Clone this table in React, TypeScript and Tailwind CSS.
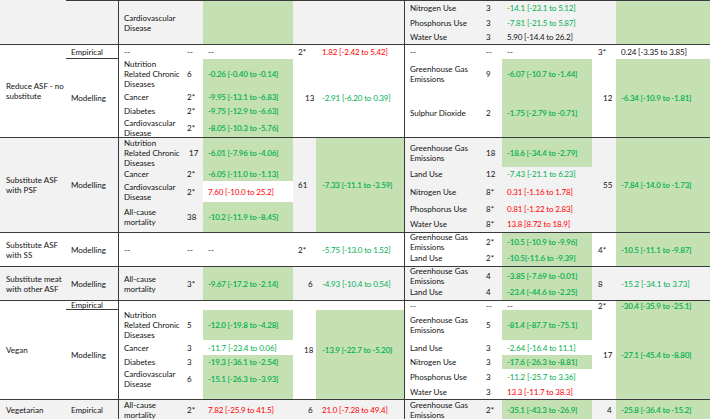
import React from "react";

const GRID =
  "grid grid-cols-[66px_52px_65px_20px_90px_23px_88px_79px_19px_90px_24px_94px]";

const CS: Record<number, string> = {
  1: "col-start-1",
  2: "col-start-2",
  3: "col-start-3",
  4: "col-start-4",
  5: "col-start-5",
  6: "col-start-6",
  7: "col-start-7",
  8: "col-start-8",
  9: "col-start-9",
  10: "col-start-10",
  11: "col-start-11",
  12: "col-start-12",
};
const RS: Record<number, string> = {
  1: "row-start-1",
  2: "row-start-2",
  3: "row-start-3",
  4: "row-start-4",
  5: "row-start-5",
  6: "row-start-6",
};
const SP: Record<number, string> = {
  1: "row-span-1",
  2: "row-span-2",
  3: "row-span-3",
  4: "row-span-4",
  5: "row-span-5",
  6: "row-span-6",
};
const PAD: Record<number, string> = {
  1: "pl-[6px]",
  2: "pl-[5px]",
  3: "pl-[5px]",
  4: "pl-[4px]",
  5: "pl-[5px]",
  6: "pl-[5px]",
  7: "pl-[6px]",
  8: "pl-[5px]",
  9: "pl-[3px]",
  10: "pl-[5px]",
  11: "pl-[6px]",
  12: "pl-[5px]",
};

type CP = {
  c: number;
  r?: number;
  rs?: number;
  cs?: number;
  p?: string;
  x?: string;
  children?: React.ReactNode;
};

function Cell({ c, r = 1, rs = 1, cs = 1, p, x = "", children }: CP) {
  const line = c === 3 || c === 8 ? "border-l border-l-[#3a3a3a]" : "";
  return (
    <div
      className={`${CS[c]} ${RS[r]} ${SP[rs]} ${cs === 2 ? "col-span-2" : ""} ${
        p ?? PAD[c]
      } ${line} flex items-center whitespace-nowrap ${x}`}
    >
      <div>{children}</div>
    </div>
  );
}

const GB = "bg-[#c5e0b3]";

function G({ children }: { children: React.ReactNode }) {
  return (
    <span className="font-semibold tracking-[-0.2px] text-[#00b050]">
      {children}
    </span>
  );
}
function Lg({ children }: { children: React.ReactNode }) {
  return (
    <span className="tracking-[-0.15px] text-[#00b050]">{children}</span>
  );
}
function R({ children }: { children: React.ReactNode }) {
  return (
    <span className="tracking-[-0.15px] text-[#ff0000]">{children}</span>
  );
}
function N({ children }: { children: React.ReactNode }) {
  return <span className="tracking-[-0.15px]">{children}</span>;
}

const NRCD = (
  <>
    Nutrition
    <br />
    Related Chronic
    <br />
    Diseases
  </>
);
const CVD = (
  <>
    Cardiovascular
    <br />
    Disease
  </>
);
const ACM = (
  <>
    All-cause
    <br />
    mortality
  </>
);
const GHG = (
  <>
    Greenhouse Gas
    <br />
    Emissions
  </>
);

export default function App() {
  return (
    <div className="w-[710px] h-[419px] overflow-hidden bg-white text-[#111] text-[8px] leading-[10px] font-['Lato',sans-serif]">
      {/* Section 0: continuation row */}
      <div className={`${GRID} grid-rows-[15px_15px_14px] bg-[#f2f2f2]`}>
        <Cell c={1} rs={3} />
        <Cell c={2} rs={3} x="border-t border-t-[#3a3a3a]" />
        <Cell c={3} rs={3} x="border-t border-t-[#3a3a3a]">
          {CVD}
        </Cell>
        <Cell c={4} rs={3} x="border-t border-t-[#3a3a3a]" />
        <Cell c={5} rs={3} x={`border-t border-t-[#3a3a3a] ${GB}`} />
        <Cell c={6} rs={3} cs={2} x="border-t border-t-[#3a3a3a]" />
        <Cell c={8} r={1} x="border-t border-t-[#3a3a3a]">
          Nitrogen Use
        </Cell>
        <Cell c={9} r={1} x="border-t border-t-[#3a3a3a]">
          3
        </Cell>
        <Cell c={10} r={1} x="border-t border-t-[#3a3a3a]">
          <Lg>-14.1 [-23.1 to 5.12]</Lg>
        </Cell>
        <Cell c={8} r={2}>Phosphorus Use</Cell>
        <Cell c={9} r={2}>3</Cell>
        <Cell c={10} r={2}>
          <Lg>-7.81 [-21.5 to 5.87]</Lg>
        </Cell>
        <Cell c={8} r={3}>Water Use</Cell>
        <Cell c={9} r={3}>3</Cell>
        <Cell c={10} r={3}>
          <N>5.90 [-14.4 to 26.2]</N>
        </Cell>
        <Cell c={11} rs={3} x="border-t border-t-[#3a3a3a]" />
        <Cell c={12} rs={3} x={`border-t border-t-[#3a3a3a] ${GB}`} />
      </div>

      {/* Section 1: Reduce ASF - no substitute */}
      <div
        className={`${GRID} grid-rows-[14px_30px_15px_14px_19px] border-t border-[#3a3a3a] bg-white`}
      >
        <Cell c={1} rs={5}>
          Reduce ASF - no
          <br />
          substitute
        </Cell>
        <Cell c={2} r={1} x="border-b border-b-[#3a3a3a]">
          Empirical
        </Cell>
        <Cell c={2} r={2} rs={4}>
          Modelling
        </Cell>
        <Cell c={3} r={1}>--</Cell>
        <Cell c={4} r={1}>--</Cell>
        <Cell c={5} r={1}>--</Cell>
        <Cell c={3} r={2}>{NRCD}</Cell>
        <Cell c={4} r={2}>6</Cell>
        <Cell c={5} r={2} x={GB}>
          <G>-0.26 [-0.40 to -0.14]</G>
        </Cell>
        <Cell c={3} r={3}>Cancer</Cell>
        <Cell c={4} r={3}>2*</Cell>
        <Cell c={5} r={3} x={GB}>
          <G>-9.95 [-13.1 to -6.83]</G>
        </Cell>
        <Cell c={3} r={4}>Diabetes</Cell>
        <Cell c={4} r={4}>2*</Cell>
        <Cell c={5} r={4} x={GB}>
          <G>-9.75 [-12.9 to -6.63]</G>
        </Cell>
        <Cell c={3} r={5}>{CVD}</Cell>
        <Cell c={4} r={5}>2*</Cell>
        <Cell c={5} r={5} x={GB}>
          <G>-8.05 [-10.3 to -5.76]</G>
        </Cell>
        <Cell c={6} r={1}>2*</Cell>
        <Cell c={7} r={1}>
          <R>1.82 [-2.42 to 5.42]</R>
        </Cell>
        <Cell c={6} r={2} rs={4} p="pl-[12px]">
          13
        </Cell>
        <Cell c={7} r={2} rs={4}>
          <Lg>-2.91 [-6.20 to 0.39]</Lg>
        </Cell>
        <Cell c={8} r={1}>--</Cell>
        <Cell c={9} r={1}>--</Cell>
        <Cell c={10} r={1}>--</Cell>
        <Cell c={11} r={1}>3*</Cell>
        <Cell c={12} r={1}>
          <N>0.24 [-3.35 to 3.85]</N>
        </Cell>
        <Cell c={8} r={2}>{GHG}</Cell>
        <Cell c={9} r={2}>9</Cell>
        <Cell c={10} r={2} x={GB}>
          <G>-6.07 [-10.7 to -1.44]</G>
        </Cell>
        <Cell c={8} r={3} rs={3}>
          Sulphur Dioxide
        </Cell>
        <Cell c={9} r={3} rs={3}>
          2
        </Cell>
        <Cell c={10} r={3} rs={3} x={GB}>
          <G>-1.75 [-2.79 to -0.71]</G>
        </Cell>
        <Cell c={11} r={2} rs={4} p="pl-[11px]">
          12
        </Cell>
        <Cell c={12} r={2} rs={4} x={GB}>
          <G>-6.34 [-10.9 to -1.81]</G>
        </Cell>
      </div>

      {/* Section 2: Substitute ASF with PSF */}
      <div
        className={`${GRID} grid-rows-[29px_14px_21px_14px_16px] border-t border-[#3a3a3a] bg-[#f2f2f2]`}
      >
        <Cell c={1} rs={5}>
          Substitute ASF
          <br />
          with PSF
        </Cell>
        <Cell c={2} rs={5}>
          Modelling
        </Cell>
        <Cell c={3} r={1}>{NRCD}</Cell>
        <Cell c={4} r={1} p="pl-[6px]">
          17
        </Cell>
        <Cell c={5} r={1} x={GB}>
          <G>-6.01 [-7.96 to -4.06]</G>
        </Cell>
        <Cell c={3} r={2}>Cancer</Cell>
        <Cell c={4} r={2}>2*</Cell>
        <Cell c={5} r={2} x={GB}>
          <G>-6.05 [-11.0 to -1.13]</G>
        </Cell>
        <Cell c={3} r={3}>{CVD}</Cell>
        <Cell c={4} r={3}>2*</Cell>
        <Cell c={5} r={3} x="bg-white">
          <R>7.60 [-10.0 to 25.2]</R>
        </Cell>
        <Cell c={3} r={4} rs={2}>
          {ACM}
        </Cell>
        <Cell c={4} r={4} rs={2}>
          38
        </Cell>
        <Cell c={5} r={4} rs={2} x={GB}>
          <G>-10.2 [-11.9 to -8.45]</G>
        </Cell>
        <Cell c={6} rs={5}>
          61
        </Cell>
        <Cell c={7} rs={5} x={GB}>
          <G>-7.33 [-11.1 to -3.59]</G>
        </Cell>
        <Cell c={8} r={1}>{GHG}</Cell>
        <Cell c={9} r={1}>18</Cell>
        <Cell c={10} r={1} x={GB}>
          <G>-18.6 [-34.4 to -2.79]</G>
        </Cell>
        <Cell c={8} r={2}>Land Use</Cell>
        <Cell c={9} r={2}>12</Cell>
        <Cell c={10} r={2}>
          <Lg>-7.43 [-21.1 to 6.23]</Lg>
        </Cell>
        <Cell c={8} r={3}>Nitrogen Use</Cell>
        <Cell c={9} r={3}>8*</Cell>
        <Cell c={10} r={3}>
          <R>0.31 [-1.16 to 1.78]</R>
        </Cell>
        <Cell c={8} r={4}>Phosphorus Use</Cell>
        <Cell c={9} r={4}>8*</Cell>
        <Cell c={10} r={4}>
          <R>0.81 [-1.22 to 2.83]</R>
        </Cell>
        <Cell c={8} r={5}>Water Use</Cell>
        <Cell c={9} r={5}>8*</Cell>
        <Cell c={10} r={5}>
          <R>13.8 [8.72 to 18.9]</R>
        </Cell>
        <Cell c={11} rs={5} p="pl-[11px]">
          55
        </Cell>
        <Cell c={12} rs={5} x={GB}>
          <G>-7.84 [-14.0 to -1.73]</G>
        </Cell>
      </div>

      {/* Section 3: Substitute ASF with SS */}
      <div
        className={`${GRID} grid-rows-[17px_16px] border-t border-[#3a3a3a] bg-white`}
      >
        <Cell c={1} rs={2}>
          Substitute ASF
          <br />
          with SS
        </Cell>
        <Cell c={2} rs={2}>
          Modelling
        </Cell>
        <Cell c={3} rs={2}>
          --
        </Cell>
        <Cell c={4} rs={2}>
          --
        </Cell>
        <Cell c={5} rs={2}>
          --
        </Cell>
        <Cell c={6} rs={2}>
          2*
        </Cell>
        <Cell c={7} rs={2}>
          <Lg>-5.75 [-13.0 to 1.52]</Lg>
        </Cell>
        <Cell c={8} r={1}>{GHG}</Cell>
        <Cell c={9} r={1}>2*</Cell>
        <Cell c={10} r={1} x={GB}>
          <G>-10.5 [-10.9 to -9.96]</G>
        </Cell>
        <Cell c={8} r={2}>Land Use</Cell>
        <Cell c={9} r={2}>2*</Cell>
        <Cell c={10} r={2} x={GB}>
          <G>-10.5[-11.6 to -9.39]</G>
        </Cell>
        <Cell c={11} rs={2}>
          4*
        </Cell>
        <Cell c={12} rs={2} x={GB}>
          <G>-10.5 [-11.1 to -9.87]</G>
        </Cell>
      </div>

      {/* Section 4: Substitute meat with other ASF */}
      <div
        className={`${GRID} grid-rows-[17px_16px] border-t border-[#3a3a3a] bg-[#f2f2f2]`}
      >
        <Cell c={1} rs={2}>
          Substitute meat
          <br />
          with other ASF
        </Cell>
        <Cell c={2} rs={2}>
          Modelling
        </Cell>
        <Cell c={3} rs={2}>
          {ACM}
        </Cell>
        <Cell c={4} rs={2}>
          3*
        </Cell>
        <Cell c={5} rs={2} x={GB}>
          <G>-9.67 [-17.2 to -2.14]</G>
        </Cell>
        <Cell c={6} rs={2} p="pl-[15px]">
          6
        </Cell>
        <Cell c={7} rs={2}>
          <Lg>-4.93 [-10.4 to 0.54]</Lg>
        </Cell>
        <Cell c={8} r={1}>{GHG}</Cell>
        <Cell c={9} r={1}>4</Cell>
        <Cell c={10} r={1} x={GB}>
          <G>-3.85 [-7.69 to -0.01]</G>
        </Cell>
        <Cell c={8} r={2}>Land Use</Cell>
        <Cell c={9} r={2}>4</Cell>
        <Cell c={10} r={2} x={GB}>
          <G>-23.4 [-44.6 to -2.25]</G>
        </Cell>
        <Cell c={11} rs={2}>
          8
        </Cell>
        <Cell c={12} rs={2}>
          <Lg>-15.2 [-34.1 to 3.73]</Lg>
        </Cell>
      </div>

      {/* Section 5: Vegan */}
      <div
        className={`${GRID} grid-rows-[9px_30px_15px_14px_15px_15px] border-t border-[#3a3a3a] bg-white`}
      >
        <Cell c={1} rs={6}>
          Vegan
        </Cell>
        <Cell c={2} r={1} x="border-b border-b-[#3a3a3a]">
          Empirical
        </Cell>
        <Cell c={2} r={2} rs={5}>
          Modelling
        </Cell>
        <Cell c={3} r={1} />
        <Cell c={3} r={2}>{NRCD}</Cell>
        <Cell c={4} r={2}>5</Cell>
        <Cell c={5} r={2} x={GB}>
          <G>-12.0 [-19.8 to -4.28]</G>
        </Cell>
        <Cell c={3} r={3}>Cancer</Cell>
        <Cell c={4} r={3}>3</Cell>
        <Cell c={5} r={3}>
          <Lg>-11.7 [-23.4 to 0.06]</Lg>
        </Cell>
        <Cell c={3} r={4}>Diabetes</Cell>
        <Cell c={4} r={4}>3</Cell>
        <Cell c={5} r={4} x={GB}>
          <G>-19.3 [-36.1 to -2.54]</G>
        </Cell>
        <Cell c={3} r={5} rs={2} x="pb-[10px]">
          {CVD}
        </Cell>
        <Cell c={4} r={5} rs={2} x="pb-[10px]">
          6
        </Cell>
        <Cell c={5} r={5} rs={2} x={`${GB} pb-[10px]`}>
          <G>-15.1 [-26.3 to -3.93]</G>
        </Cell>
        <Cell c={6} r={2} rs={5} p="pl-[11px]" x="pb-[9px]">
          18
        </Cell>
        <Cell c={7} r={2} rs={5} x={`${GB} pb-[9px]`}>
          <G>-13.9 [-22.7 to -5.20]</G>
        </Cell>
        <Cell c={8} r={1}>--</Cell>
        <Cell c={9} r={1}>--</Cell>
        <Cell c={10} r={1}>--</Cell>
        <Cell c={11} r={1}>2*</Cell>
        <Cell c={12} r={1} x={GB}>
          <G>-30.4 [-35.9 to -25.1]</G>
        </Cell>
        <Cell c={8} r={2}>{GHG}</Cell>
        <Cell c={9} r={2}>5</Cell>
        <Cell c={10} r={2} x={GB}>
          <G>-81.4 [-87.7 to -75.1]</G>
        </Cell>
        <Cell c={8} r={3}>Land Use</Cell>
        <Cell c={9} r={3}>3</Cell>
        <Cell c={10} r={3}>
          <Lg>-2.64 [-16.4 to 11.1]</Lg>
        </Cell>
        <Cell c={8} r={4}>Nitrogen Use</Cell>
        <Cell c={9} r={4}>3</Cell>
        <Cell c={10} r={4} x={GB}>
          <G>-17.6 [-26.3 to -8.81]</G>
        </Cell>
        <Cell c={8} r={5}>Phosphorus Use</Cell>
        <Cell c={9} r={5}>3</Cell>
        <Cell c={10} r={5}>
          <Lg>-11.2 [-25.7 to 3.36]</Lg>
        </Cell>
        <Cell c={8} r={6}>Water Use</Cell>
        <Cell c={9} r={6}>3</Cell>
        <Cell c={10} r={6}>
          <R>13.3 [-11.7 to 38.3]</R>
        </Cell>
        <Cell c={11} r={2} rs={5} p="pl-[11px]">
          17
        </Cell>
        <Cell c={12} r={2} rs={5} x={GB}>
          <G>-27.1 [-45.4 to -8.80]</G>
        </Cell>
      </div>

      {/* Section 6: Vegetarian */}
      <div
        className={`${GRID} grid-rows-[20px] border-t border-[#3a3a3a] bg-[#f2f2f2]`}
      >
        <Cell c={1}>Vegetarian</Cell>
        <Cell c={2}>Empirical</Cell>
        <Cell c={3}>{ACM}</Cell>
        <Cell c={4}>2*</Cell>
        <Cell c={5}>
          <R>7.82 [-25.9 to 41.5]</R>
        </Cell>
        <Cell c={6} p="pl-[15px]">
          6
        </Cell>
        <Cell c={7}>
          <R>21.0 [-7.28 to 49.4]</R>
        </Cell>
        <Cell c={8}>{GHG}</Cell>
        <Cell c={9}>2*</Cell>
        <Cell c={10} x={GB}>
          <G>-35.1 [-43.3 to -26.9]</G>
        </Cell>
        <Cell c={11} p="pl-[15px]">
          4
        </Cell>
        <Cell c={12} x={GB}>
          <G>-25.8 [-36.4 to -15.2]</G>
        </Cell>
      </div>
    </div>
  );
}
